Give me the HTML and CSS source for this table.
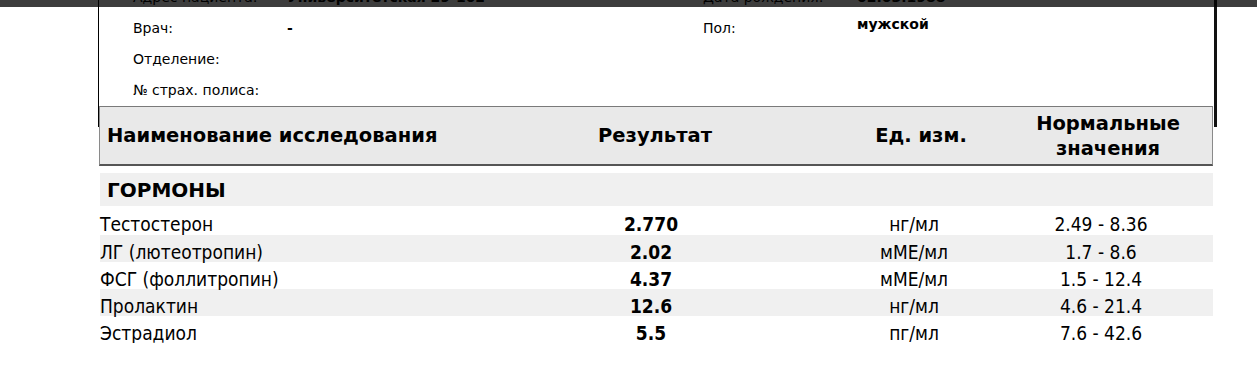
FILE: index.html
```html
<!DOCTYPE html>
<html lang="ru">
<head>
<meta charset="utf-8">
<title>Результаты анализов</title>
<link rel="stylesheet" href="styles.css">
</head>
<body>
<div class="page">
  <div class="info">
    <div class="info-grid">
      <div class="lbl">Адрес пациента:</div>
      <div class="val">Университетская 29-102</div>
      <div class="lbl">Дата рождения:</div>
      <div class="val">02.03.1988</div>

      <div class="lbl">Врач:</div>
      <div class="val">-</div>
      <div class="lbl">Пол:</div>
      <div class="val raised">мужской</div>

      <div class="lbl">Отделение:</div>
      <div class="val"></div>
      <div class="lbl"></div>
      <div class="val"></div>

      <div class="lbl">№ страх. полиса:</div>
      <div class="val"></div>
      <div class="lbl"></div>
      <div class="val"></div>
    </div>
  </div>

  <div class="thead">
    <div class="th th-name">Наименование исследования</div>
    <div class="th">Результат</div>
    <div class="th">Ед. изм.</div>
    <div class="th">Нормальные<br>значения</div>
  </div>

  <div class="section">ГОРМОНЫ</div>

  <div class="rows">
    <div class="row first">
      <div class="c-name">Тестостерон</div>
      <div class="c-res">2.770</div>
      <div class="c-unit">нг/мл</div>
      <div class="c-range">2.49 - 8.36</div>
    </div>
    <div class="row alt">
      <div class="c-name">ЛГ (лютеотропин)</div>
      <div class="c-res">2.02</div>
      <div class="c-unit">мМЕ/мл</div>
      <div class="c-range">1.7 - 8.6</div>
    </div>
    <div class="row">
      <div class="c-name">ФСГ (фоллитропин)</div>
      <div class="c-res">4.37</div>
      <div class="c-unit">мМЕ/мл</div>
      <div class="c-range">1.5 - 12.4</div>
    </div>
    <div class="row alt">
      <div class="c-name">Пролактин</div>
      <div class="c-res">12.6</div>
      <div class="c-unit">нг/мл</div>
      <div class="c-range">4.6 - 21.4</div>
    </div>
    <div class="row">
      <div class="c-name">Эстрадиол</div>
      <div class="c-res">5.5</div>
      <div class="c-unit">пг/мл</div>
      <div class="c-range">7.6 - 42.6</div>
    </div>
  </div>
</div>
<div class="toolbar-shade"></div>
</body>
</html>
```

FILE: styles.css
```css
html, body {
  margin: 0;
  padding: 0;
  background: #ffffff;
}

body {
  font-family: "DejaVu Sans Condensed", "DejaVu Sans", sans-serif;
  color: #000;
  overflow: hidden;
}

.page {
  margin-top: -19px;
}

.info {
  margin-left: 98px;
  width: 1119px;
  box-sizing: border-box;
  border-left: 1px solid #000;
  border-right: 3px solid #111;
  padding-left: 34px;
  padding-bottom: 22px;
}

.info-grid {
  display: grid;
  grid-template-columns: 154px 416px 154px 1fr;
  grid-auto-rows: 31px;
  align-items: center;
  font-family: "DejaVu Sans", sans-serif;
  font-size: 14px;
}

.val {
  font-weight: bold;
}

.raised {
  margin-bottom: 8px;
}

.thead {
  margin-top: -21px;
  margin-left: 99px;
  width: 1114px;
  height: 60px;
  box-sizing: border-box;
  background: #e9e9e9;
  border-top: 1px solid #7a7a7a;
  border-left: 1px solid #8a8a8a;
  border-right: 1px solid #8a8a8a;
  border-bottom: 2px solid #555;
  display: grid;
  grid-template-columns: 372px 366px 166px 1fr;
  align-items: center;
  font-family: "DejaVu Sans", sans-serif;
  font-weight: bold;
  font-size: 19.5px;
  line-height: 25px;
}

.th {
  text-align: center;
}

.th-name {
  text-align: left;
  padding-left: 7px;
}

.section {
  margin-top: 7px;
  margin-left: 100px;
  width: 1113px;
  height: 33px;
  box-sizing: border-box;
  background: #f0f0f0;
  padding-left: 7px;
  font-family: "DejaVu Sans", sans-serif;
  font-weight: bold;
  font-size: 20px;
  line-height: 35px;
}

.rows {
  margin-left: 100px;
  width: 1113px;
}

.row {
  display: grid;
  grid-template-columns: 371px 360px 166px 208px;
  height: 27px;
  box-sizing: border-box;
  padding-top: 7px;
  line-height: 20px;
  font-size: 19px;
}

.row.first {
  height: 29px;
  padding-top: 8px;
}

.row.alt {
  background: #f0f0f0;
}

.c-res {
  text-align: center;
  font-weight: bold;
}

.c-unit,
.c-range {
  text-align: center;
}

.toolbar-shade {
  position: fixed;
  top: 0;
  left: 0;
  right: 0;
  height: 7px;
  background: rgba(0, 0, 0, 0.76);
}
```
